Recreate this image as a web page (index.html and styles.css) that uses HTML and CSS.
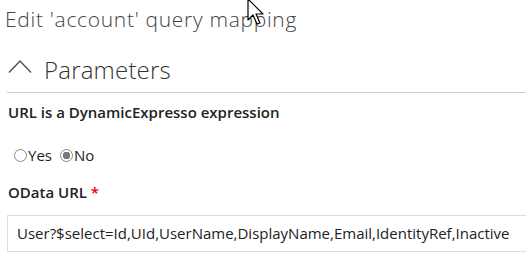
FILE: index.html
```html
<!DOCTYPE html>
<html lang="en">
<head>
  <meta charset="UTF-8">
  <title>Edit query mapping</title>
  <link rel="stylesheet" href="styles.css">
</head>
<body>

  <h1 class="title">Edit 'account' query mapping</h1>

  <div class="section">
    <div class="section-head">
      <svg class="chevron" width="24" height="14" viewBox="0 0 24 14">
        <polyline points="1,13.5 12,2 23,13.5" fill="none" stroke="#555" stroke-width="1.5"/>
      </svg>
      <span>Parameters</span>
    </div>

    <div class="field first">
      <label class="field-label">URL is a DynamicExpresso expression</label>
      <div class="radios">
        <label><input type="radio" name="dyn">Yes</label>
        <label><input type="radio" name="dyn" checked>No</label>
      </div>
    </div>

    <div class="field">
      <label class="field-label">OData URL <span class="req">*</span></label>
      <div class="text-box">User?$select=Id,UId,UserName,DisplayName,Email,IdentityRef,Inactive</div>
    </div>
  </div>

  <svg class="cursor" width="20" height="28" viewBox="0 0 20 28">
    <path d="M1,1 L1,22 L6,17 L10,26 L13,25 L9,16 L16,16 Z" fill="#fff" stroke="#000" stroke-width="1.2" stroke-linejoin="round"/>
  </svg>

</body>
</html>
```

FILE: styles.css
```css
body {
  margin: 0;
  padding: 0;
  background-color: white;
  font-family: "Open Sans", Arial, sans-serif;
  color: #222;
  position: relative;
  overflow: hidden;
}

.title {
  margin: 0;
  padding: 5px 0 0 5px;
  font-family: "Open Sans", Arial, sans-serif;
  font-weight: 300;
  font-size: 21px;
  letter-spacing: 0.7px;
  line-height: 28px;
  color: #444;
}

.section {
  padding: 0 0 0 7px;
}

.section-head {
  display: flex;
  align-items: flex-end;
  gap: 12px;
  height: 60px;
  box-sizing: border-box;
  padding: 0 0 6px 1px;
  border-bottom: 1px solid #ccc;
  font-weight: 300;
  font-size: 24px;
  letter-spacing: 0.2px;
  line-height: 32px;
  color: #333;
}

.chevron {
  margin-bottom: 13px;
}

.field.first {
  padding-top: 9px;
}

.field-label {
  display: block;
  font-weight: 600;
  font-size: 15px;
  line-height: 20px;
  padding-left: 1px;
}

.req {
  color: #e00;
}

.radios {
  display: flex;
  gap: 8px;
  padding: 23px 0 17px 7px;
  font-size: 15px;
  line-height: 20px;
}

.radios label {
  display: flex;
  align-items: center;
}

.radios input {
  appearance: none;
  margin: 0 1px 0 0;
  width: 13px;
  height: 13px;
  border: 1px solid #888;
  border-radius: 50%;
  box-sizing: border-box;
  background: #fff;
}

.radios input:checked {
  background: radial-gradient(circle, #777 0 3.5px, #fff 4px);
}

.text-box {
  margin-top: 13px;
  height: 37px;
  box-sizing: border-box;
  border: 1px solid #ddd;
  border-right: none;
  padding: 7px 9px;
  font-size: 15px;
  line-height: 21px;
  color: #222;
  white-space: nowrap;
}

.cursor {
  position: absolute;
  left: 247px;
  top: -2px;
}
```
